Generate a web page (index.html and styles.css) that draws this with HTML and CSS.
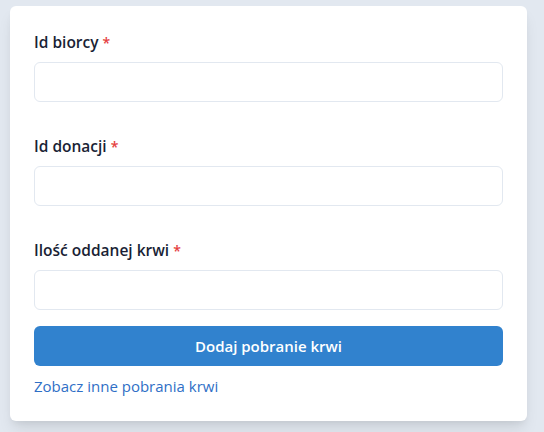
FILE: index.html
```html
<!DOCTYPE html>
<html lang="pl">
<head>
<meta charset="utf-8">
<title>Dodaj pobranie krwi</title>
<link rel="stylesheet" href="styles.css">
</head>
<body>
<div class="card">
  <form class="form">
    <div class="field">
      <label class="label" for="biorca">Id biorcy<span class="req">*</span></label>
      <input class="input" id="biorca" type="text">
    </div>
    <div class="field">
      <label class="label" for="donacja">Id donacji<span class="req">*</span></label>
      <input class="input" id="donacja" type="text">
    </div>
    <div class="field">
      <label class="label" for="ilosc">Ilość oddanej krwi<span class="req">*</span></label>
      <input class="input" id="ilosc" type="text">
    </div>
    <button class="button" type="button">Dodaj pobranie krwi</button>
    <a class="link" href="#">Zobacz inne pobrania krwi</a>
  </form>
</div>
</body>
</html>
```
FILE: styles.css
```css
html, body {
  margin: 0;
  padding: 0;
}
body {
  background: #e2e8f0;
  font-family: "Open Sans", "Noto Sans", sans-serif;
  color: #1a202c;
  padding: 6px 17px 0 10px;
  height: 432px;
  box-sizing: border-box;
  overflow: hidden;
}
.card {
  width: 517px;
  box-sizing: border-box;
  background: #ffffff;
  border-radius: 6px;
  padding: 24px 24px 23px;
  box-shadow: 0 10px 15px -3px rgba(0,0,0,0.1), 0 4px 6px -2px rgba(0,0,0,0.05);
}
.form {
  display: flex;
  flex-direction: column;
}
.field {
  display: flex;
  flex-direction: column;
  margin-bottom: 32px;
}
.field:nth-of-type(3) {
  margin-bottom: 16px;
}
.label {
  display: block;
  height: 24px;
  font-size: 15.5px;
  font-weight: 600;
  line-height: 24px;
  margin-bottom: 8px;
  color: #1a1f36;
}
.req {
  color: #e53e3e;
  margin-left: 4px;
  font-size: 14px;
  line-height: 1;
}
.input {
  height: 40px;
  box-sizing: border-box;
  border: 1px solid #e2e8f0;
  border-radius: 6px;
  padding: 0 16px;
  font: inherit;
  outline: none;
  background: #fff;
}
.button {
  height: 40px;
  border: none;
  border-radius: 6px;
  background: #3182ce;
  color: #ffffff;
  font-family: inherit;
  font-size: 15px;
  font-weight: 600;
  cursor: pointer;
}
.link {
  margin-top: 8px;
  font-size: 15px;
  line-height: 24px;
  color: #2f6fc6;
  text-decoration: none;
  align-self: flex-start;
}
```
